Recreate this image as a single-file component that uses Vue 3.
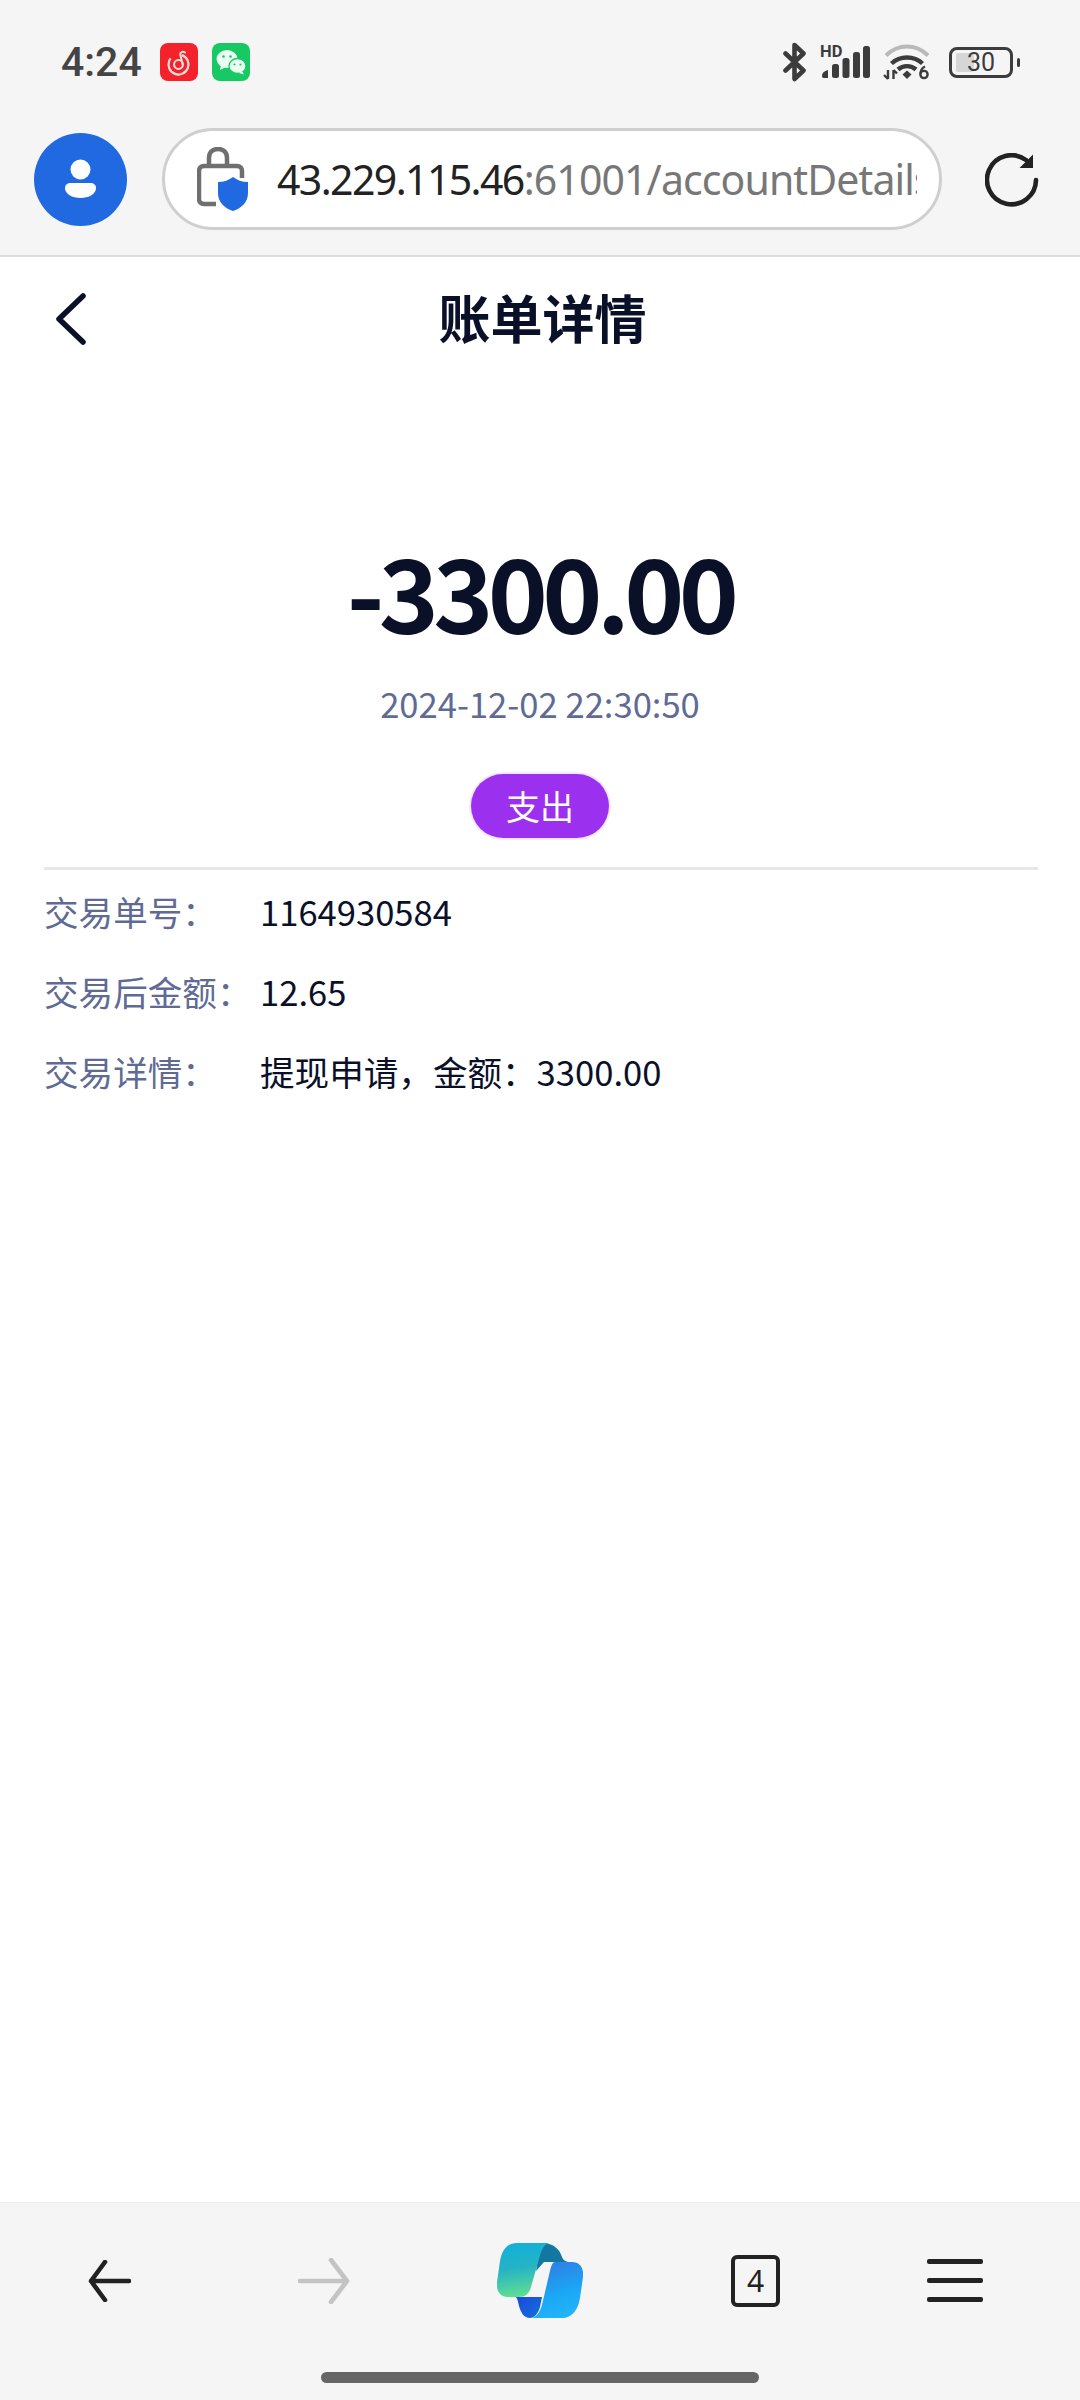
<template>
  <div class="page">
    <header class="chrome">
      <div class="status-bar">
        <span class="time">4:24</span>
        <span class="app-icon app-icon--red" aria-hidden="true">
          <svg viewBox="0 0 38 38" fill="none">
            <circle cx="18.5" cy="21.5" r="10" stroke="#fde0dc" stroke-width="2.2" stroke-dasharray="50 13" transform="rotate(-70 18.5 21.5)" />
            <circle cx="18.5" cy="21.5" r="4.4" stroke="#fde0dc" stroke-width="2" />
            <path d="M25 9.5c-2.6-1.7-5.400 0-4.500 3l2.200 9" stroke="#fde0dc" stroke-width="2" stroke-linecap="round" />
          </svg>
        </span>
        <span class="app-icon app-icon--green" aria-hidden="true">
          <svg viewBox="0 0 38 38">
            <ellipse cx="15" cy="16" rx="10.500" ry="9" fill="#eafff1" />
            <path d="M9 22l-1 5 6-3z" fill="#eafff1" />
            <ellipse cx="25.500" cy="23" rx="8.500" ry="7.500" fill="#eafff1" stroke="#16c964" stroke-width="1.300" />
            <path d="M30 28l2 3.500-5-1.500z" fill="#eafff1" />
            <circle cx="11.500" cy="13.500" r="1.300" fill="#16c964" />
            <circle cx="18.500" cy="13.500" r="1.300" fill="#16c964" />
            <circle cx="22.500" cy="21.500" r="1.100" fill="#16c964" />
            <circle cx="28.500" cy="21.500" r="1.100" fill="#16c964" />
          </svg>
        </span>
        <div class="status-right">
          <svg class="ic-bt" viewBox="0 0 24 40" fill="none" aria-hidden="true">
            <path d="M2.500 11.500 L20.500 28.500 L11.500 37 V3 L20.500 11.500 L2.500 28.500" stroke="#3c3c3c" stroke-width="4.600" stroke-linejoin="round" stroke-linecap="round" />
          </svg>
          <div class="signal">
            <span class="hd">HD</span>
            <svg viewBox="0 0 48 32" aria-hidden="true">
              <path d="M2 32c-2 0-2-1-2-2.500 0-2.500 2-4.500 6-5.500V32z" fill="#3c3c3c" />
              <rect x="10" y="18" width="7" height="14" rx="2.500" fill="#3c3c3c" />
              <rect x="20.500" y="12" width="7" height="20" rx="2.500" fill="#3c3c3c" />
              <rect x="31" y="6" width="7" height="26" rx="2.500" fill="#3c3c3c" />
              <rect x="41" y="0" width="7" height="32" rx="2.500" fill="#3c3c3c" />
            </svg>
          </div>
          <svg class="ic-wifi" viewBox="0 0 48 36" fill="none" aria-hidden="true">
            <path d="M3 11.500C15 -0.500 33 -0.500 45 11.500" stroke="#b9b9b9" stroke-width="4" />
            <path d="M8.500 19.500C17 11.500 31 11.500 39.500 19.500" stroke="#3c3c3c" stroke-width="4.400" />
            <path d="M15 25.500C20 21 28 21 33 25.500" stroke="#3c3c3c" stroke-width="4.400" />
            <path d="M19.500 30.500L24 26.500L28.500 30.500L24 35z" fill="#3c3c3c" />
            <path d="M5 26v9M1 31l4 4M10.500 35v-9M10.500 26l3.500 3.500" stroke="#3c3c3c" stroke-width="2.400" />
            <circle cx="41" cy="30.500" r="3.600" stroke="#3c3c3c" stroke-width="2.400" />
            <path d="M37.500 30c0-4 1.500-6 4.500-7.500" stroke="#3c3c3c" stroke-width="2.400" />
          </svg>
          <div class="battery">
            <div class="battery-body">
              <span class="battery-fill"></span>
              <span class="battery-text">30</span>
            </div>
            <span class="battery-nub"></span>
          </div>
        </div>
      </div>

      <div class="toolbar">
        <div class="avatar" aria-hidden="true">
          <svg viewBox="0 0 93 93">
            <circle cx="46.500" cy="36.500" r="10" fill="#fff" />
            <path d="M37 50H56C60 50 62 52 62 55 62 61 55 65 46.500 65 38 65 31 61 31 55 31 52 33 50 37 50Z" fill="#fff" />
          </svg>
        </div>
        <div class="url-pill">
          <svg class="ic-lock" viewBox="0 0 52 64" fill="none" aria-hidden="true">
            <path d="M12 20V11C12 5.500 15.500 2 21 2 26.500 2 30 5.500 30 11V20" stroke="#6f6f6f" stroke-width="4.500" />
            <path d="M19 57H7C4 57 2 55 2 52V24C2 21 4 19 7 19H40C43 19 45 21 45 24V31" stroke="#6f6f6f" stroke-width="4.500" />
            <path d="M36 30C40 33 45 35 51 35V46C51 55 45 61 36 64 27 61 21 55 21 46V35C27 35 32 33 36 30Z" fill="#2069e0" />
          </svg>
          <div class="url-text"><span class="url-host">43.229.115.46</span><span class="url-path">:61001/accountDetails</span></div>
        </div>
        <svg class="ic-reload" viewBox="0 0 54 54" fill="none" aria-hidden="true">
          <path d="M51 27A24.500 24.500 0 1 1 41 7" stroke="#222" stroke-width="4.600" stroke-linecap="round" />
          <path d="M48 1.500V15H34.500" fill="#222" />
        </svg>
      </div>
    </header>

    <main class="content">
      <div class="nav">
        <svg class="ic-back" viewBox="0 0 30 52" fill="none" aria-hidden="true">
          <path d="M27 3L3 26L27 49" stroke="#0b1029" stroke-width="5.500" stroke-linecap="round" stroke-linejoin="round" />
        </svg>
        <h1 class="nav-title">账单详情</h1>
      </div>

      <section class="summary">
        <p class="amount">-3300.00</p>
        <p class="date">2024-12-02 22:30:50</p>
        <span class="tag">支出</span>
      </section>

      <ul class="details">
        <li v-for="row in rows" :key="row.label" class="detail-row">
          <span class="detail-label">{{ row.label }}</span>
          <span class="detail-value">{{ row.value }}</span>
        </li>
      </ul>
    </main>

    <footer class="bottom-bar">
      <div class="bottom-icons">
        <svg class="ic-prev" viewBox="0 0 43 42" fill="none" aria-hidden="true">
          <path d="M41 21H3M17 2L3 21L17 40" stroke="#222" stroke-width="4.600" stroke-linecap="round" stroke-linejoin="round" />
        </svg>
        <svg class="ic-next" viewBox="0 0 52 46" fill="none" aria-hidden="true">
          <path d="M2 23H49M33 2L49 23L33 44" stroke="#c4c4c4" stroke-width="4.600" stroke-linecap="round" stroke-linejoin="round" />
        </svg>
        <svg class="ic-copilot" viewBox="27 12 86 75" aria-hidden="true">
          <defs>
            <linearGradient id="cpLeft" x1="0" y1="0" x2="0.15" y2="1">
              <stop offset="0" stop-color="#0fb0dc" />
              <stop offset="0.5" stop-color="#25b3c4" />
              <stop offset="1" stop-color="#5cdc94" />
            </linearGradient>
            <linearGradient id="cpRight" x1="0.3" y1="0" x2="0.6" y2="1">
              <stop offset="0" stop-color="#2f7de4" />
              <stop offset="0.6" stop-color="#1aa8f5" />
              <stop offset="1" stop-color="#22b4f8" />
            </linearGradient>
            <linearGradient id="cpBottom" x1="0" y1="0" x2="1" y2="1">
              <stop offset="0" stop-color="#1c48d8" />
              <stop offset="1" stop-color="#1570e0" />
            </linearGradient>
          </defs>
          <path d="M72 12C84 12 90 19 92 26 93 29 96 31 100 31H74L66 40C68 28 70 16 72 12Z" fill="#12789f" />
          <path d="M46 66H72L70 76C68 83 64 87 60 87 54 87 51 82 49 75 48 70 47 67 46 66Z" fill="url(#cpBottom)" />
          <path d="M47 12H80C74 12 71 20 69 28L61 56C59 63 55 66 49 66H38C30 66 26 60 27 51L30 30C32 19 37 12 47 12Z" fill="url(#cpLeft)" />
          <path d="M85 31H102C110 31 114 37 113 46L110 67C108 79 102 87 92 87H60C66 87 70 81 72 74L79 44C81 36 82 31 85 31Z" fill="url(#cpRight)" />
        </svg>
        <div class="tab-count">4</div>
        <div class="menu-lines" aria-hidden="true">
          <span></span>
          <span></span>
          <span></span>
        </div>
      </div>
      <div class="home-indicator"></div>
    </footer>
  </div>
</template>

<script setup>
const rows = [
  { label: "交易单号：", value: "1164930584" },
  { label: "交易后金额：", value: "12.65" },
  { label: "交易详情：", value: "提现申请，金额：3300.00" },
];
</script>

<style>
html,
body {
  margin: 0;
  background: #fff;
}
</style>

<style scoped>
.page {
  display: flex;
  flex-direction: column;
  width: 1080px;
  height: 2400px;
  overflow: hidden;
  background: #fff;
  font-family: "Noto Sans CJK SC", "Noto Sans", sans-serif;
}

.chrome {
  height: 255px;
  flex: 0 0 auto;
  background: #f5f5f5;
  border-bottom: 2px solid #dcdcdc;
}

.status-bar {
  display: flex;
  align-items: center;
  height: 124px;
  padding: 0 61px;
  box-sizing: border-box;
}

.time {
  font-family: Roboto, sans-serif;
  font-size: 41px;
  font-weight: 500;
  color: #444;
}

.app-icon {
  display: block;
  width: 38px;
  height: 38px;
  margin-left: 18px;
  border-radius: 8px;
}

.app-icon + .app-icon {
  margin-left: 14px;
}

.app-icon svg {
  display: block;
  width: 100%;
  height: 100%;
}

.app-icon--red {
  background: #f4222a;
}

.app-icon--green {
  background: #16c964;
}

.status-right {
  display: flex;
  align-items: center;
  margin-left: auto;
  margin-right: -1px;
}

.ic-bt {
  width: 24px;
  height: 40px;
}

.signal {
  position: relative;
  width: 48px;
  height: 32px;
  margin-left: 15px;
}

.signal svg {
  display: block;
  width: 100%;
  height: 100%;
}

.hd {
  position: absolute;
  top: -2px;
  left: -2px;
  font-family: Roboto, sans-serif;
  font-size: 16.500px;
  line-height: 15px;
  font-weight: 700;
  color: #3c3c3c;
}

.ic-wifi {
  width: 48px;
  height: 36px;
  margin-left: 13px;
}

.battery {
  display: flex;
  align-items: center;
  margin-left: 18px;
}

.battery-body {
  position: relative;
  display: flex;
  align-items: center;
  justify-content: center;
  width: 64px;
  height: 31px;
  box-sizing: border-box;
  border: 3px solid #3c3c3c;
  border-radius: 8px;
}

.battery-fill {
  position: absolute;
  left: 4px;
  top: 3px;
  bottom: 3px;
  width: 18px;
  border-radius: 2px;
  background: #d6d6d6;
}

.battery-text {
  position: relative;
  font-family: Roboto, sans-serif;
  font-size: 25px;
  line-height: 25px;
  color: #3c3c3c;
}

.battery-nub {
  width: 3px;
  height: 9px;
  margin-left: 4px;
  border-radius: 2px;
  background: #3c3c3c;
}

.toolbar {
  display: flex;
  align-items: flex-start;
  padding: 4px 0 0 34px;
}

.avatar {
  width: 93px;
  height: 93px;
  margin-top: 5px;
  border-radius: 50%;
  background: #2069e0;
}

.avatar svg {
  display: block;
  width: 100%;
  height: 100%;
}

.url-pill {
  display: flex;
  align-items: center;
  width: 780px;
  height: 102px;
  margin-left: 35px;
  padding: 0 22px 0 32px;
  box-sizing: border-box;
  border: 3px solid #cfcfcf;
  border-radius: 51px;
  background: #fff;
}

.ic-lock {
  flex: 0 0 auto;
  width: 52px;
  height: 64px;
}

.url-text {
  flex: 1;
  min-width: 0;
  margin-left: 28px;
  overflow: hidden;
  white-space: nowrap;
  font-family: "Noto Sans", sans-serif;
  font-size: 41px;
}

.url-host {
  color: #222;
  letter-spacing: -1.600px;
}

.url-path {
  color: #777;
  letter-spacing: -0.900px;
}

.ic-reload {
  width: 54px;
  height: 54px;
  margin: 25px 0 0 43px;
}

.content {
  flex: 1;
  min-height: 0;
}

.nav {
  position: relative;
  display: flex;
  align-items: center;
  justify-content: center;
  height: 126px;
  padding: 0 0 8px 5px;
  box-sizing: border-box;
}

.ic-back {
  position: absolute;
  left: 56px;
  top: 36px;
  width: 30px;
  height: 52px;
}

.nav-title {
  margin: 0;
  font-size: 52px;
  font-weight: 700;
  color: #0b1029;
}

.summary {
  display: flex;
  flex-direction: column;
  align-items: center;
  padding-top: 137px;
}

.amount {
  margin: 0;
  font-size: 102px;
  line-height: 140px;
  font-weight: 700;
  letter-spacing: -5.700px;
  color: #0b1029;
}

.date {
  margin: 18px 0 0;
  font-size: 34.600px;
  line-height: 50px;
  color: #5f6b95;
}

.tag {
  margin-top: 46px;
  width: 138px;
  height: 64px;
  border-radius: 32px;
  background: #9b30ee;
  box-shadow: 0 0 0 2px #f3e8ff;
  color: #fff;
  font-size: 34px;
  line-height: 64px;
  text-align: center;
}

.details {
  margin: 29px 42px 0 44px;
  padding: 1px 0 0;
  list-style: none;
  border-top: 3px solid #e5e7eb;
}

.detail-row {
  display: flex;
  align-items: center;
  height: 80px;
  font-size: 34.600px;
}

.detail-label {
  flex: 0 0 216px;
  color: #5f6b95;
}

.detail-value {
  color: #0b1029;
}

.bottom-bar {
  flex: 0 0 auto;
  height: 197px;
  background: #f5f5f5;
  border-top: 1px solid #ececec;
}

.bottom-icons {
  display: flex;
  align-items: center;
  height: 155px;
  padding: 0 0 0 88px;
  box-sizing: border-box;
}

.ic-prev {
  width: 43px;
  height: 42px;
}

.ic-next {
  width: 52px;
  height: 46px;
  margin-left: 167px;
}

.ic-copilot {
  width: 86px;
  height: 75px;
  margin-left: 147px;
}

.tab-count {
  width: 49px;
  height: 52px;
  margin-left: 148px;
  box-sizing: border-box;
  border: 4px solid #222;
  border-radius: 6px;
  color: #222;
  font-family: "Noto Sans", sans-serif;
  font-size: 30px;
  line-height: 44px;
  text-align: center;
}

.menu-lines {
  display: flex;
  flex-direction: column;
  gap: 14px;
  width: 56px;
  margin-left: 147px;
}

.menu-lines span {
  height: 5px;
  border-radius: 2px;
  background: #222;
}

.home-indicator {
  width: 438px;
  height: 11px;
  margin: 14px auto 0;
  border-radius: 6px;
  background: #666;
}
</style>
